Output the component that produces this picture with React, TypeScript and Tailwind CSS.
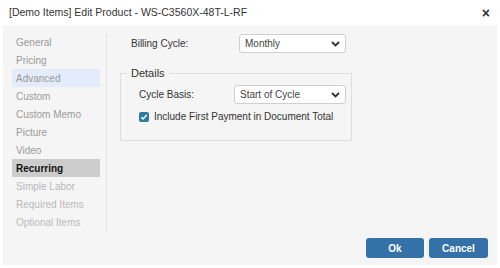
import React from "react";

const navItems = [
  { label: "General", tone: "normal" },
  { label: "Pricing", tone: "normal" },
  { label: "Advanced", tone: "hover" },
  { label: "Custom", tone: "normal" },
  { label: "Custom Memo", tone: "normal" },
  { label: "Picture", tone: "normal" },
  { label: "Video", tone: "normal" },
  { label: "Recurring", tone: "active" },
  { label: "Simple Labor", tone: "faint" },
  { label: "Required Items", tone: "faint" },
  { label: "Optional Items", tone: "faint" },
];

function Chevron() {
  return (
    <svg width="9" height="6" viewBox="0 0 9 6" className="shrink-0">
      <path d="M1 1l3.5 3.5L8 1" fill="none" stroke="#333" strokeWidth="1.8" />
    </svg>
  );
}

function Select({ value, className }: { value: string; className: string }) {
  return (
    <div
      className={`flex items-center justify-between bg-white border border-[#cfcfcf] rounded-[3px] pl-[5px] pr-[5px] h-[19px] text-[10px] text-[#444] ${className}`}
    >
      <span>{value}</span>
      <Chevron />
    </div>
  );
}

export default function App() {
  return (
    <div className="w-[500px] h-[268px] bg-white text-[10px] font-['Liberation_Sans',Arial,sans-serif] flex flex-col">
      {/* Header */}
      <div className="h-[25px] flex items-center justify-between pl-[9px] pr-[10px]">
        <span className="text-[10.5px] text-[#333]">[Demo Items] Edit Product - WS-C3560X-48T-L-RF</span>
        <span className="text-[14px] font-bold text-[#333] leading-none">×</span>
      </div>

      {/* Body */}
      <div className="mx-[3px] h-[240px] bg-[#f5f5f5] flex flex-col">
        <div className="flex flex-1">
          {/* Left nav */}
          <div className="ml-[9px] mt-[8px] w-[95px] h-[199px] border-r border-[#e3e3e3]">
            {navItems.map((it) => (
              <div
                key={it.label}
                className={
                  "w-[88px] h-[18px] flex items-center pl-[4px] " +
                  (it.tone === "active"
                    ? "bg-[#cccccc] text-[#111] font-bold"
                    : it.tone === "hover"
                    ? "bg-[#e4ebfa] text-[#999]"
                    : it.tone === "faint"
                    ? "text-[#b9b9b9]"
                    : "text-[#9a9a9a]")
                }
              >
                {it.label}
              </div>
            ))}
          </div>

          {/* Content */}
          <div className="flex-1 pl-[13px] pt-[9px]">
            <div className="flex items-center h-[19px] pl-[11px] text-[#333]">
              <span className="w-[108px]">Billing Cycle:</span>
              <Select value="Monthly" className="w-[107px]" />
            </div>

            <fieldset className="mt-[14px] w-[231px] h-[74px] border border-[#dedede] pl-[18px] pr-[5px]">
              <legend className="px-[4px] -ml-[12px] text-[11px] leading-[13px] text-[#333]">Details</legend>
              <div className="flex items-center h-[19px] mt-[5px] text-[#333]">
                <span className="w-[95px]">Cycle Basis:</span>
                <Select value="Start of Cycle" className="w-[112px]" />
              </div>
              <div className="flex items-center mt-[5px] text-[#333]">
                <span className="w-[10px] h-[10px] rounded-[2px] bg-[#2b7ba6] flex items-center justify-center mr-[5px]">
                  <svg width="8" height="8" viewBox="0 0 8 8">
                    <path d="M1.3 4.2l1.8 1.8 3.6-4" fill="none" stroke="#fff" strokeWidth="1.5" />
                  </svg>
                </span>
                <span>Include First Payment in Document Total</span>
              </div>
            </fieldset>
          </div>
        </div>

        {/* Footer */}
        <div className="flex justify-end gap-[5px] pr-[9px] pb-[7px]">
          <button className="w-[58px] h-[20px] rounded-[3px] bg-[#3471a8] text-white font-bold text-[10px]">Ok</button>
          <button className="w-[59px] h-[20px] rounded-[3px] bg-[#3471a8] text-white font-bold text-[10px]">Cancel</button>
        </div>
      </div>
    </div>
  );
}
